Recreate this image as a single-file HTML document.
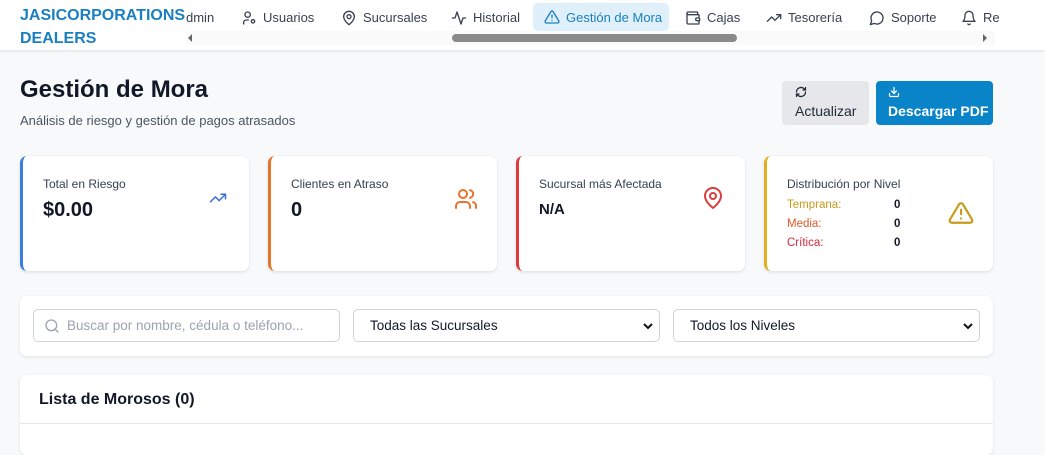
<!DOCTYPE html>
<html><head><meta charset="utf-8"><style>
*{box-sizing:border-box;margin:0;padding:0}
body{width:1045px;height:432px;overflow:hidden;background:#f8f9fb;font-family:"Liberation Sans",sans-serif;color:#111827;position:relative}
.hdr{position:absolute;left:0;top:0;width:1045px;height:50px;background:#fff;box-shadow:0 1px 3px rgba(0,0,0,.1)}
.logo{position:absolute;left:20px;top:4px;color:#1a7fc1;font-weight:bold;font-size:16px;line-height:23px}
.nav{position:absolute;top:5px;height:25px;display:flex;align-items:center;font-size:13px;color:#374151}
.nav span{display:flex;align-items:center;gap:6px;position:absolute;white-space:nowrap;height:25px}
.nav svg{width:16px;height:16px;fill:none;stroke:currentColor;stroke-width:2;stroke-linecap:round;stroke-linejoin:round}
.track{position:absolute;left:185px;top:31px;width:810px;height:14px;background:#fafafa}
.thumb{position:absolute;left:452px;top:34px;width:285px;height:8px;border-radius:4px;background:#8a8a8a}
.card{position:absolute;top:156px;width:229px;height:115px;background:#fff;border-radius:7px;box-shadow:0 1px 3px rgba(0,0,0,.12);border-left:3px solid}
.card .l{position:absolute;left:20px;top:21px;font-size:12px;color:#374151}
.card .v{position:absolute;left:20px;top:43px;font-size:20px;font-weight:bold}
.card svg{position:absolute;fill:none;stroke-width:2;stroke-linecap:round;stroke-linejoin:round}
.panel{position:absolute;left:20px;width:973px;background:#fff;border-radius:7px;box-shadow:0 1px 3px rgba(0,0,0,.1)}
.inp{position:absolute;top:309px;height:33px;border:1px solid #d1d5db;border-radius:5px;background:#fff;font-size:13.5px;display:flex;align-items:center;padding-left:16px}
</style></head><body>
<div class="hdr">
<div class="logo">JASICORPORATIONS<br>DEALERS</div>
<div class="nav" style="left:0;width:1045px">
<span style="left:186px">dmin</span>
<span style="left:241px"><svg viewBox="0 0 24 24"><circle cx="10" cy="7" r="4"/><path d="M4 21v-2a4 4 0 0 1 4-4h3"/><circle cx="18" cy="17" r="2.5"/></svg>Usuarios</span>
<span style="left:341px"><svg viewBox="0 0 24 24"><path d="M20 10c0 6-8 12-8 12s-8-6-8-12a8 8 0 0 1 16 0z"/><circle cx="12" cy="10" r="3"/></svg>Sucursales</span>
<span style="left:451px"><svg viewBox="0 0 24 24"><path d="M22 12h-4l-3 9L9 3l-3 9H2"/></svg>Historial</span>
<span style="left:533px;width:136px;background:#e0f0fb;border-radius:5px;padding-left:11px;color:#1a7fc1;top:-2px;height:28px"><svg viewBox="0 0 24 24"><path d="M10.3 3.9L1.8 18a2 2 0 0 0 1.7 3h17a2 2 0 0 0 1.7-3L13.7 3.9a2 2 0 0 0-3.4 0z"/><path d="M12 9v4M12 17h.01"/></svg>Gestión de Mora</span>
<span style="left:685px"><svg viewBox="0 0 24 24"><path d="M19 7V4a1 1 0 0 0-1-1H5a2 2 0 0 0 0 4h15a1 1 0 0 1 1 1v4h-3a2 2 0 0 0 0 4h3a1 1 0 0 0 1-1v-2"/><path d="M3 5v14a2 2 0 0 0 2 2h15a1 1 0 0 0 1-1v-4"/></svg>Cajas</span>
<span style="left:766px"><svg viewBox="0 0 24 24"><path d="M22 7l-8.5 8.5-5-5L2 17"/><path d="M16 7h6v6"/></svg>Tesorería</span>
<span style="left:869px"><svg viewBox="0 0 24 24"><path d="M7.9 20A9 9 0 1 0 4 16.1L2 22z"/></svg>Soporte</span>
<span style="left:961px"><svg viewBox="0 0 24 24"><path d="M6 8a6 6 0 0 1 12 0c0 7 3 9 3 9H3s3-2 3-9"/><path d="M10.3 21a1.9 1.9 0 0 0 3.4 0"/></svg>Re</span>
</div>
<div class="track"></div>
<div class="thumb"></div>
<div style="position:absolute;left:188px;top:34px;width:0;height:0;border-top:4px solid transparent;border-bottom:4px solid transparent;border-right:4px solid #666"></div>
<div style="position:absolute;left:983px;top:34px;width:0;height:0;border-top:4px solid transparent;border-bottom:4px solid transparent;border-left:4px solid #666"></div>
</div>

<div style="position:absolute;left:20px;top:76px;font-size:24px;font-weight:bold">Gestión de Mora</div>
<div style="position:absolute;left:20px;top:113px;font-size:13px;color:#4b5563">Análisis de riesgo y gestión de pagos atrasados</div>

<div style="position:absolute;left:782px;top:81px;width:87px;height:44px;background:#e5e7eb;border-radius:4px;font-size:14px;padding:4px 0 0 13px;color:#1f2937;line-height:16px">
<svg width="12" height="12" viewBox="0 0 24 24" fill="none" stroke="#1f2937" stroke-width="2.5" stroke-linecap="round"><path d="M3 12a9 9 0 0 1 15-6.7L21 8M21 3v5h-5M21 12a9 9 0 0 1-15 6.7L3 16M8 16H3v5"/></svg><div style="margin-top:2px">Actualizar</div></div>
<div style="position:absolute;left:876px;top:81px;width:117px;height:44px;background:#0a84c8;border-radius:4px;font-size:14px;padding:4px 0 0 12px;color:#fff;font-weight:bold;line-height:16px">
<svg width="12" height="12" viewBox="0 0 24 24" fill="none" stroke="#fff" stroke-width="2.5" stroke-linecap="round"><path d="M21 15v4a2 2 0 0 1-2 2H5a2 2 0 0 1-2-2v-4M7 10l5 5 5-5M12 15V3"/></svg><div style="margin-top:2px">Descargar PDF</div></div>

<div class="card" style="left:20px;border-left-color:#3b7de0"><div class="l">Total en Riesgo</div><div class="v">$0.00</div>
<svg style="left:183px;top:33px" width="24" height="18" viewBox="0 0 24 24" stroke="#3b6fd8" stroke-width="2.5"><path d="M22 7l-8.5 8.5-5-5L2 17"/><path d="M16 7h6v6"/></svg></div>
<div class="card" style="left:268px;border-left-color:#e8732a"><div class="l">Clientes en Atraso</div><div class="v">0</div>
<svg style="left:183px;top:31px" width="24" height="24" viewBox="0 0 24 24" stroke="#e8732a"><path d="M16 21v-2a4 4 0 0 0-4-4H6a4 4 0 0 0-4 4v2"/><circle cx="9" cy="7" r="4"/><path d="M22 21v-2a4 4 0 0 0-3-3.9M16 3.1a4 4 0 0 1 0 7.8"/></svg></div>
<div class="card" style="left:516px;border-left-color:#dc3c3c"><div class="l">Sucursal más Afectada</div><div class="v" style="font-size:15px;top:45px">N/A</div>
<svg style="left:182px;top:30px" width="24" height="24" viewBox="0 0 24 24" stroke="#dc3c3c"><path d="M20 10c0 6-8 12-8 12s-8-6-8-12a8 8 0 0 1 16 0z"/><circle cx="12" cy="10" r="3"/></svg></div>
<div class="card" style="left:764px;border-left-color:#e0b020"><div class="l">Distribución por Nivel</div>
<div style="position:absolute;left:20px;top:40px;font-size:11.5px;line-height:19px"><div style="color:#c99a1a">Temprana:</div><div style="color:#e05a2a">Media:</div><div style="color:#d02a3a">Crítica:</div></div>
<div style="position:absolute;left:127px;top:40px;font-size:11.5px;line-height:19px;font-weight:bold"><div>0</div><div>0</div><div>0</div></div>
<svg style="left:181px;top:44px" width="26" height="26" viewBox="0 0 24 24" stroke="#c99a1a"><path d="M10.3 3.9L1.8 18a2 2 0 0 0 1.7 3h17a2 2 0 0 0 1.7-3L13.7 3.9a2 2 0 0 0-3.4 0z"/><path d="M12 9v4M12 17h.01"/></svg></div>

<div class="panel" style="top:296px;height:60px"></div>
<div class="inp" style="left:33px;width:307px;color:#9ca3af;padding-left:10px"><svg width="16" height="16" viewBox="0 0 24 24" fill="none" stroke="#9ca3af" stroke-width="2" stroke-linecap="round" style="margin-right:7px"><circle cx="11" cy="11" r="8"/><path d="M21 21l-4.3-4.3"/></svg>Buscar por nombre, cédula o teléfono...</div>
<div class="inp" style="left:353px;width:307px">Todas las Sucursales<svg style="position:absolute;right:6px;top:12px" width="10" height="8" viewBox="0 0 10 8"><path d="M1 2l4 4 4-4" fill="none" stroke="#111" stroke-width="2"/></svg></div>
<div class="inp" style="left:673px;width:307px">Todos los Niveles<svg style="position:absolute;right:6px;top:12px" width="10" height="8" viewBox="0 0 10 8"><path d="M1 2l4 4 4-4" fill="none" stroke="#111" stroke-width="2"/></svg></div>

<div class="panel" style="top:375px;height:80px"><div style="position:absolute;left:19px;top:16px;font-size:16px;font-weight:bold">Lista de Morosos (0)</div><div style="position:absolute;left:0;top:48px;width:973px;height:1px;background:#e5e7eb"></div></div>
</body></html>
